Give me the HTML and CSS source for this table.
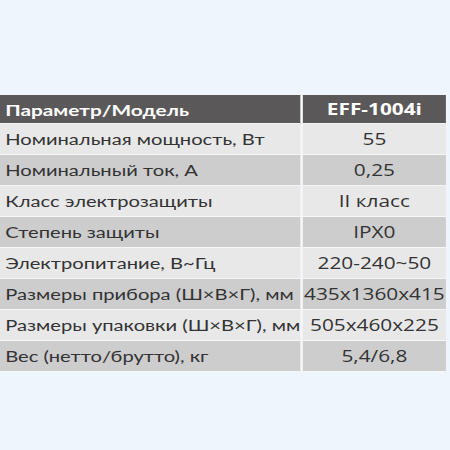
FILE: index.html
```html
<!DOCTYPE html>
<html lang="ru">
<head>
<meta charset="utf-8">
<link rel="stylesheet" href="styles.css">
</head>
<body>
<table class="spec">
  <colgroup><col class="c1"><col class="c2"></colgroup>
  <tr class="head"><th class="p">Параметр/Модель</th><th class="v">EFF-1004i</th></tr>
  <tr class="odd"><td class="p">Номинальная мощность, Вт</td><td class="v">55</td></tr>
  <tr class="even"><td class="p">Номинальный ток, А</td><td class="v">0,25</td></tr>
  <tr class="odd"><td class="p">Класс электрозащиты</td><td class="v">II класс</td></tr>
  <tr class="even"><td class="p">Степень защиты</td><td class="v">IPX0</td></tr>
  <tr class="odd"><td class="p">Электропитание, В~Гц</td><td class="v">220-240~50</td></tr>
  <tr class="even"><td class="p">Размеры прибора (Ш×В×Г), мм</td><td class="v">435x1360x415</td></tr>
  <tr class="odd"><td class="p">Размеры упаковки (Ш×В×Г), мм</td><td class="v">505x460x225</td></tr>
  <tr class="even"><td class="p">Вес (нетто/брутто), кг</td><td class="v">5,4/6,8</td></tr>
</table>
</body>
</html>
```
FILE: styles.css
```css
html, body {
  margin: 0;
  padding: 0;
  background: #eef5fc;
  width: 450px;
  height: 450px;
  overflow: hidden;
}
/* the source image is horizontally stretched; reproduce with a uniform scaleX */
.spec {
  margin-top: 95px;
  width: 343px;
  table-layout: fixed;
  border-collapse: collapse;
  color: #333;
  transform: scaleX(1.3);
  transform-origin: 0 0;
}
.c1 { width: 232px; }
.c2 { width: 111px; }
.spec th, .spec td {
  padding: 0;
  white-space: nowrap;
  border-right: 2px solid #f4f6f8;
  border-bottom: 1px solid #f4f6f8;
}
.spec .p {
  text-align: left;
  padding-left: 4px;
  font-family: Lato, "Noto Sans", sans-serif;
  font-size: 15.5px;
}
.spec .v {
  text-align: center;
  font-family: "Open Sans", "Noto Sans", sans-serif;
  font-size: 16px;
  border-right: none;
}
.head th {
  height: 28px;
  background: #5b5859;
  color: #fff;
  font-weight: 700;
}
.head .p { font-size: 16px; }
.head .v { font-size: 16px; }
.spec td { height: 30px; }
.odd td { background: #e8e8e9; }
.even td { background: #cdcdce; }
```
